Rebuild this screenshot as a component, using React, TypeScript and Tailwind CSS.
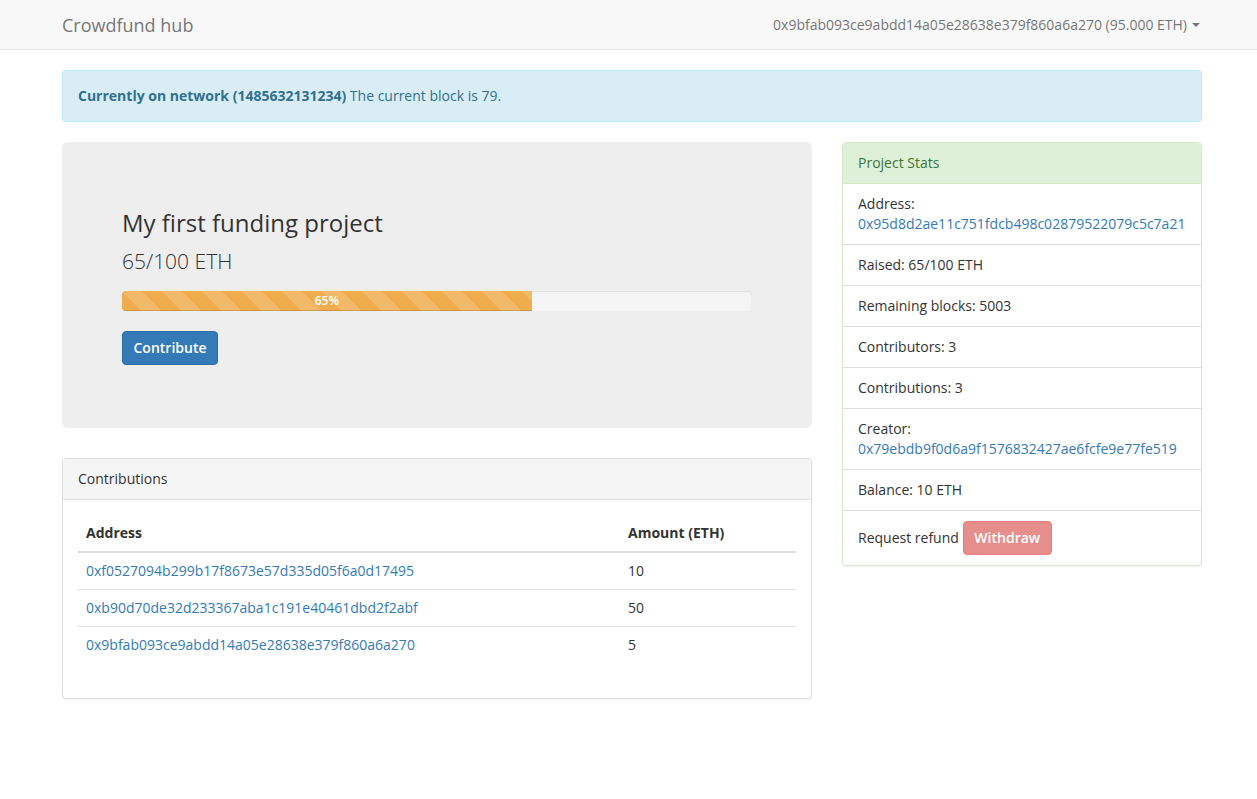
const contributions = [
  { address: '0xf0527094b299b17f8673e57d335d05f6a0d17495', amount: '10' },
  { address: '0xb90d70de32d233367aba1c191e40461dbd2f2abf', amount: '50' },
  { address: '0x9bfab093ce9abdd14a05e28638e379f860a6a270', amount: '5' },
];

function StatItem({ children }: { children: React.ReactNode }) {
  return <li className="border-t border-[#ddd] px-[15px] py-[10px] first:border-t-0">{children}</li>;
}

export default function App() {
  return (
    <div className="min-h-screen bg-white font-['Open_Sans',sans-serif] text-[14px] leading-[20px] text-[#333]">
      {/* Navbar */}
      <nav className="h-[50px] border-b border-[#e7e7e7] bg-[#f8f8f8]">
        <div className="ml-[47px] flex h-full w-[1170px] items-center justify-between px-[15px]">
          <span className="text-[18px] leading-[20px] text-[#777]">Crowdfund hub</span>
          <span className="mr-[2px] flex items-center text-[#777]">
            0x9bfab093ce9abdd14a05e28638e379f860a6a270 (95.000 ETH)
            <span className="ml-[5px] inline-block h-0 w-0 border-x-[4px] border-t-[4px] border-x-transparent border-t-[#777]" />
          </span>
        </div>
      </nav>

      <div className="ml-[47px] w-[1170px] px-[15px] pt-[20px]">
        {/* Alert */}
        <div className="mb-[20px] rounded-[4px] border border-[#bce8f1] bg-[#d9edf7] p-[15px] text-[#31708f]">
          <strong className="font-bold">Currently on network (1485632131234)</strong> The current block is 79.
        </div>

        <div className="flex gap-[30px]">
          {/* Left column */}
          <div className="w-[750px]">
            <div className="mb-[30px] rounded-[6px] bg-[#eee] px-[60px] py-[48px]">
              <h3 className="mt-[20px] mb-[10px] text-[24px] leading-[26.4px] font-medium">My first funding project</h3>
              <p className="mb-[15px] text-[21px] leading-[30px] font-light text-[#333]">65/100 ETH</p>
              <div className="mb-[20px] h-[20px] overflow-hidden rounded-[4px] bg-[#f5f5f5] shadow-[inset_0_1px_2px_rgba(0,0,0,0.1)]">
                <div className="h-full w-[65%] bg-[#f0ad4e] bg-[linear-gradient(45deg,rgba(255,255,255,.15)_25%,transparent_25%,transparent_50%,rgba(255,255,255,.15)_50%,rgba(255,255,255,.15)_75%,transparent_75%,transparent)] bg-[length:40px_40px] text-center text-[12px] leading-[20px] font-semibold text-white shadow-[inset_0_-1px_0_rgba(0,0,0,0.15)]">
                  65%
                </div>
              </div>
              <p className="mb-[15px]">
                <button className="h-[34px] rounded-[4px] border border-[#2e6da4] bg-[#337ab7] px-[10.5px] font-semibold text-white">
                  Contribute
                </button>
              </p>
            </div>

            <div className="rounded-[4px] border border-[#ddd] bg-white shadow-[0_1px_1px_rgba(0,0,0,0.05)]">
              <div className="rounded-t-[3px] border-b border-[#ddd] bg-[#f5f5f5] px-[15px] py-[10px]">Contributions</div>
              <div className="p-[15px]">
                <table className="mb-[20px] w-full border-collapse">
                  <thead>
                    <tr>
                      <th className="w-[542px] border-b-2 border-[#ddd] p-[8px] text-left font-bold">Address</th>
                      <th className="border-b-2 border-[#ddd] p-[8px] text-left font-bold">Amount (ETH)</th>
                    </tr>
                  </thead>
                  <tbody>
                    {contributions.map((c) => (
                      <tr key={c.address}>
                        <td className="border-t border-[#ddd] p-[8px]">
                          <a className="text-[#337ab7]">{c.address}</a>
                        </td>
                        <td className="border-t border-[#ddd] p-[8px]">{c.amount}</td>
                      </tr>
                    ))}
                  </tbody>
                </table>
              </div>
            </div>
          </div>

          {/* Right column */}
          <div className="w-[360px]">
            <div className="rounded-[4px] border border-[#d6e9c6] bg-white shadow-[0_1px_1px_rgba(0,0,0,0.05)]">
              <div className="rounded-t-[3px] border-b border-[#d6e9c6] bg-[#dff0d8] px-[15px] py-[10px] text-[#3c763d]">
                Project Stats
              </div>
              <ul>
                <StatItem>
                  Address:
                  <br />
                  <a className="text-[#337ab7]">0x95d8d2ae11c751fdcb498c02879522079c5c7a21</a>
                </StatItem>
                <StatItem>Raised: 65/100 ETH</StatItem>
                <StatItem>Remaining blocks: 5003</StatItem>
                <StatItem>Contributors: 3</StatItem>
                <StatItem>Contributions: 3</StatItem>
                <StatItem>
                  Creator:
                  <br />
                  <a className="text-[#337ab7]">0x79ebdb9f0d6a9f1576832427ae6fcfe9e77fe519</a>
                </StatItem>
                <StatItem>Balance: 10 ETH</StatItem>
                <StatItem>
                  <div className="flex items-center">
                    Request refund
                    <button className="ml-[4px] h-[34px] cursor-not-allowed rounded-[4px] border border-[#d43f3a] bg-[#d9534f] px-[10.5px] font-semibold text-white opacity-65">
                      Withdraw
                    </button>
                  </div>
                </StatItem>
              </ul>
            </div>
          </div>
        </div>
      </div>
    </div>
  );
}
